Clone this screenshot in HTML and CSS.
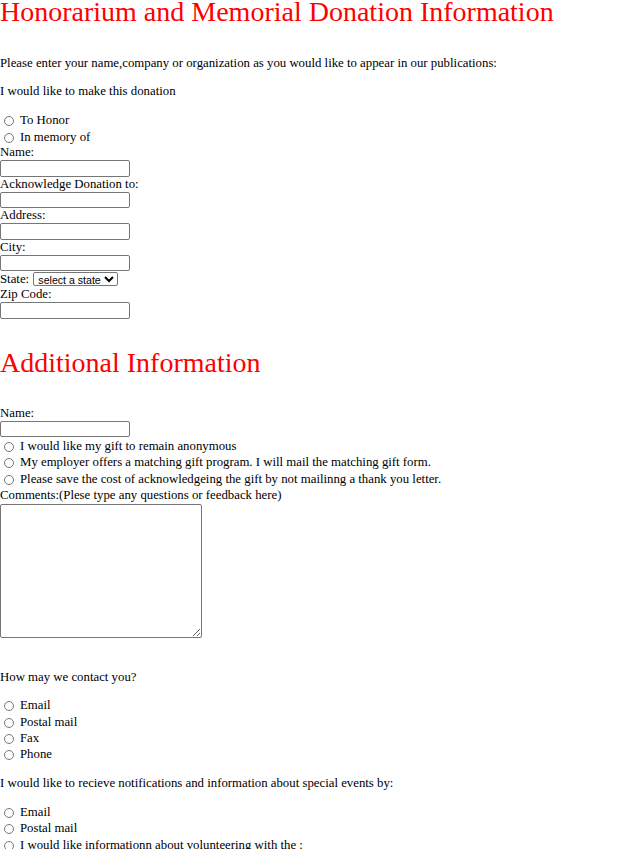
FILE: index.html
```html
<!DOCTYPE html>
<html>
<head>
<meta charset="utf-8">
<title>Honorarium and Memorial Donation Information</title>
<link rel="stylesheet" href="styles.css">
</head>
<body>
<form class="form">
  <h1 class="title">Honorarium and Memorial Donation Information</h1>
  <p class="intro">Please enter your name,company or organization as you would like to appear in our publications:</p>
  <p class="question">I would like to make this donation</p>
  <div class="radios">
    <label class="radio-row"><input type="radio" name="type" class="radio">To Honor</label>
    <label class="radio-row"><input type="radio" name="type" class="radio">In memory of</label>
  </div>
  <div class="field"><span class="label">Name:</span><input type="text" class="text"></div>
  <div class="field"><span class="label">Acknowledge Donation to:</span><input type="text" class="text"></div>
  <div class="field"><span class="label">Address:</span><input type="text" class="text"></div>
  <div class="field"><span class="label">City:</span><input type="text" class="text"></div>
  <div class="state-row">State: <select class="select"><option>select a state</option></select></div>
  <div class="field"><span class="label">Zip Code:</span><input type="text" class="text"></div>

  <h1 class="title section">Additional Information</h1>
  <div class="field"><span class="label">Name:</span><input type="text" class="text"></div>
  <div class="radios tight options">
    <label class="radio-row"><input type="radio" name="anon" class="radio">I would like my gift to remain anonymous</label>
    <label class="radio-row"><input type="radio" name="match" class="radio">My employer offers a matching gift program. I will mail the matching gift form.</label>
    <label class="radio-row"><input type="radio" name="save" class="radio">Please save the cost of acknowledgeing the gift by not mailinng a thank you letter.</label>
  </div>
  <div class="field"><span class="label">Comments:(Plese type any questions or feedback here)</span><textarea class="comments"></textarea></div>

  <p class="question contact">How may we contact you?</p>
  <div class="radios tight">
    <label class="radio-row"><input type="radio" name="contact" class="radio">Email</label>
    <label class="radio-row"><input type="radio" name="contact" class="radio">Postal mail</label>
    <label class="radio-row"><input type="radio" name="contact" class="radio">Fax</label>
    <label class="radio-row"><input type="radio" name="contact" class="radio">Phone</label>
  </div>
  <p class="question">I would like to recieve notifications and information about special events by:</p>
  <div class="radios tight">
    <label class="radio-row"><input type="radio" name="notify" class="radio">Email</label>
    <label class="radio-row"><input type="radio" name="notify" class="radio">Postal mail</label>
    <label class="radio-row"><input type="radio" name="volunteer" class="radio">I would like informationn about volunteering with the :</label>
  </div>
</form>
</body>
</html>
```

FILE: styles.css
```css
html, body {
  margin: 0;
  padding: 0;
  background: #ffffff;
}

body {
  font-family: "Liberation Serif", "Times New Roman", serif;
  font-size: 12.8px;
  line-height: 15px;
  color: #000000;
}

.form {
  display: block;
}

.title {
  margin: 0;
  font-weight: normal;
  font-size: 28px;
  line-height: 23px;
  color: #ff0000;
}

.title.section {
  margin-top: 32px;
  margin-bottom: 32px;
}

.intro {
  margin: 33px 0 13px 0;
}

.question {
  margin: 13px 0;
}

.question.contact {
  margin-top: 32px;
}

.radios {
  display: flex;
  flex-direction: column;
}

.radios.options {
  margin-top: 1px;
}

.radio-row {
  display: flex;
  align-items: center;
  height: 16.7px;
}

.radios.tight .radio-row {
  height: 16.4px;
}

.radio {
  appearance: none;
  -webkit-appearance: none;
  width: 10px;
  height: 10px;
  margin: 1px 6px 0 4px;
  border: 1px solid #767676;
  border-radius: 50%;
  background: #ffffff;
  box-sizing: border-box;
  flex: none;
}

.field {
  display: flex;
  flex-direction: column;
  align-items: flex-start;
}

.label {
  display: block;
  height: 15px;
}

.text {
  display: block;
  box-sizing: border-box;
  width: 130px;
  height: 16.5px;
  margin: 0;
  padding: 0 2px;
  border: 1px solid #767676;
  border-radius: 2px;
  font-size: 11px;
  background: #ffffff;
}

.state-row {
  display: flex;
  align-items: center;
  height: 16px;
  white-space: pre;
}

.select {
  box-sizing: border-box;
  width: 85px;
  height: 14px;
  margin: 0 0 0 1px;
  padding: 0;
  border: 1px solid #767676;
  border-radius: 2px;
  font-family: "Liberation Sans", Arial, sans-serif;
  font-size: 10.6px;
  line-height: 12px;
  color: #000000;
  background: #ffffff;
}

.comments {
  display: block;
  box-sizing: border-box;
  width: 202px;
  height: 134px;
  margin: 1px 0 0 0;
  padding: 2px;
  border: 1px solid #767676;
  border-radius: 2px;
  font-family: "Liberation Mono", monospace;
  font-size: 10.5px;
}
```
